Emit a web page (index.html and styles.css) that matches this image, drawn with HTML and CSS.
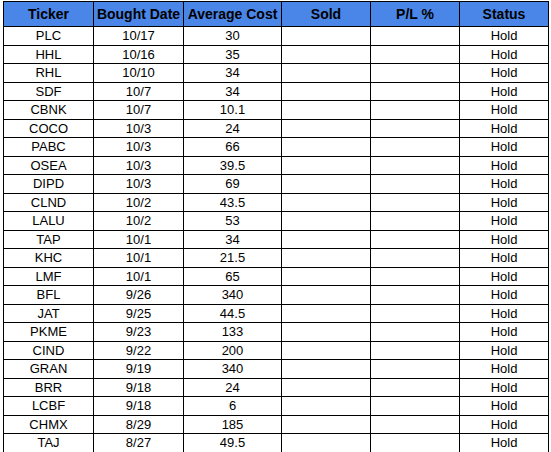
FILE: index.html
```html
<!DOCTYPE html>
<html>
<head>
<meta charset="utf-8">
<link rel="stylesheet" href="styles.css">
</head>
<body>
<table class="sheet">
<colgroup>
<col class="c1"><col class="c2"><col class="c3"><col class="c4"><col class="c5"><col class="c6">
</colgroup>
<thead>
<tr><th>Ticker</th><th>Bought Date</th><th>Average Cost</th><th>Sold</th><th>P/L %</th><th>Status</th></tr>
</thead>
<tbody>
<tr><td>PLC</td><td>10/17</td><td>30</td><td></td><td></td><td>Hold</td></tr>
<tr><td>HHL</td><td>10/16</td><td>35</td><td></td><td></td><td>Hold</td></tr>
<tr><td>RHL</td><td>10/10</td><td>34</td><td></td><td></td><td>Hold</td></tr>
<tr><td>SDF</td><td>10/7</td><td>34</td><td></td><td></td><td>Hold</td></tr>
<tr><td>CBNK</td><td>10/7</td><td>10.1</td><td></td><td></td><td>Hold</td></tr>
<tr><td>COCO</td><td>10/3</td><td>24</td><td></td><td></td><td>Hold</td></tr>
<tr><td>PABC</td><td>10/3</td><td>66</td><td></td><td></td><td>Hold</td></tr>
<tr><td>OSEA</td><td>10/3</td><td>39.5</td><td></td><td></td><td>Hold</td></tr>
<tr><td>DIPD</td><td>10/3</td><td>69</td><td></td><td></td><td>Hold</td></tr>
<tr><td>CLND</td><td>10/2</td><td>43.5</td><td></td><td></td><td>Hold</td></tr>
<tr><td>LALU</td><td>10/2</td><td>53</td><td></td><td></td><td>Hold</td></tr>
<tr><td>TAP</td><td>10/1</td><td>34</td><td></td><td></td><td>Hold</td></tr>
<tr><td>KHC</td><td>10/1</td><td>21.5</td><td></td><td></td><td>Hold</td></tr>
<tr><td>LMF</td><td>10/1</td><td>65</td><td></td><td></td><td>Hold</td></tr>
<tr><td>BFL</td><td>9/26</td><td>340</td><td></td><td></td><td>Hold</td></tr>
<tr><td>JAT</td><td>9/25</td><td>44.5</td><td></td><td></td><td>Hold</td></tr>
<tr><td>PKME</td><td>9/23</td><td>133</td><td></td><td></td><td>Hold</td></tr>
<tr><td>CIND</td><td>9/22</td><td>200</td><td></td><td></td><td>Hold</td></tr>
<tr><td>GRAN</td><td>9/19</td><td>340</td><td></td><td></td><td>Hold</td></tr>
<tr><td>BRR</td><td>9/18</td><td>24</td><td></td><td></td><td>Hold</td></tr>
<tr><td>LCBF</td><td>9/18</td><td>6</td><td></td><td></td><td>Hold</td></tr>
<tr><td>CHMX</td><td>8/29</td><td>185</td><td></td><td></td><td>Hold</td></tr>
<tr><td>TAJ</td><td>8/27</td><td>49.5</td><td></td><td></td><td>Hold</td></tr>
</tbody>
</table>
</body>
</html>
```
FILE: styles.css
```css
html, body {
  margin: 0;
  padding: 0;
  background: #ffffff;
}
body {
  padding: 1px 0 0 3px;
}
.sheet {
  border-collapse: collapse;
  table-layout: fixed;
  width: 545px;
  font-family: "Liberation Sans", Arial, sans-serif;
  color: #000;
}
.c1 { width: 90px; }
.c2 { width: 90px; }
.c3 { width: 98px; }
.c4 { width: 89px; }
.c5 { width: 89px; }
.c6 { width: 89px; }
.sheet th, .sheet td {
  border: 1px solid #000;
  text-align: center;
  padding: 0;
  white-space: nowrap;
  overflow: hidden;
}
.sheet th {
  background: #4a86e8;
  font-weight: bold;
  font-size: 14px;
  height: 24px;
}
.sheet td {
  font-size: 13px;
  height: 16.5px;
  line-height: 16px;
  padding-top: 1px;
}
```
